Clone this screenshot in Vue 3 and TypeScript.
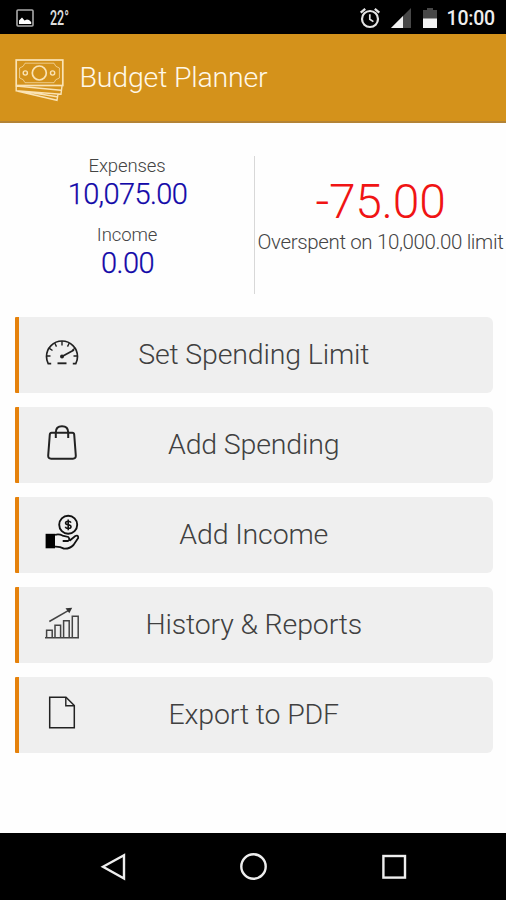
<script setup lang="ts">
type IconName = 'gauge' | 'bag' | 'income' | 'chart' | 'file'

interface MenuAction {
  label: string
  icon: IconName
}

const actions: MenuAction[] = [
  { label: 'Set Spending Limit', icon: 'gauge' },
  { label: 'Add Spending', icon: 'bag' },
  { label: 'Add Income', icon: 'income' },
  { label: 'History & Reports', icon: 'chart' },
  { label: 'Export to PDF', icon: 'file' },
]
</script>

<template>
  <div class="screen">
    <div class="status">
      <svg class="photo" viewBox="0 0 18 18">
        <rect x="1" y="1" width="16" height="16" rx="1" fill="none" stroke="#aaa" stroke-width="1.6" />
        <path d="M3 15V11.5L6 8.5L8.5 11.5L11 10.5L13 11L15.2 13V15Z" fill="#fff" />
      </svg>
      <span class="temp">22°</span>
      <svg class="alarm" viewBox="0 0 22 22">
        <g fill="none" stroke="#e4e4e4">
          <circle cx="11" cy="12" r="8" stroke-width="2.2" />
          <path d="M1.7 5.6L6.2 1.8M20.3 5.6L15.8 1.8" stroke-width="2.3" />
          <path d="M10.8 7.2V12.3L14.4 14.6" stroke-width="1.7" />
        </g>
      </svg>
      <svg class="signal" viewBox="0 0 20 20">
        <path d="M20 0V20H0Z" fill="#484848" />
        <path d="M12 8V20H0Z" fill="#f2f2f2" />
      </svg>
      <svg class="battery" viewBox="0 0 14 20">
        <path d="M0 2H4V0H10V2H14V11H0Z" fill="#484848" />
        <path d="M0 10.5H14V20H0Z" fill="#f2f2f2" />
      </svg>
      <span class="clock">10:00</span>
    </div>

    <header class="header">
      <svg class="money" viewBox="0 0 50 44" fill="none" stroke="#fae3b5" stroke-width="1.4">
        <rect x="1.2" y="2" width="46.6" height="25.5" stroke-width="1.7" />
        <circle cx="24.3" cy="15" r="7" stroke-width="1.7" />
        <circle cx="10.3" cy="15" r="2.1" />
        <circle cx="37.6" cy="15" r="2.1" />
        <path d="M10 5.2H39M10 24.7H39M4.6 10V20M44.4 10V20M10 5.2Q9 9 4.6 10M39 5.2Q40 9 44.4 10M4.6 20Q9 21 10 24.7M44.4 20Q40 21 39 24.7" stroke-width="1" opacity="0.7" />
        <path d="M1.2 28V32.8L46 36.2L47 28M1.2 28L46 32.2M2 33L42 42.3L43 36.2M9 33.5L42 38.8" />
      </svg>
      <h1 class="title">Budget Planner</h1>
    </header>

    <section class="summary">
      <div class="totals">
        <span class="caption">Expenses</span>
        <span class="amount">10,075.00</span>
        <span class="caption second">Income</span>
        <span class="amount">0.00</span>
      </div>
      <div class="balance">
        <span class="remaining">-75.00</span>
        <span class="limit">Overspent on 10,000.00 limit</span>
      </div>
    </section>

    <main class="menu">
      <button v-for="a in actions" :key="a.icon" class="action" type="button">
        <svg class="icon" viewBox="0 0 36 36" fill="none" stroke="#222" stroke-width="1.5">
          <g v-if="a.icon === 'gauge'">
            <path d="M7.2 29.6H4.2Q2.5 26.5 2.5 22.5A15.5 15.5 0 0 1 33.5 22.5Q33.5 26.5 31.8 29.6H28.8" stroke-width="1.7" />
            <path d="M13.5 29.3H22.5" stroke-width="1.9" />
            <path d="M18 7V11.5M10.7 9L12.5 12.6M25.3 9L23.5 12.6M5 14.2L8.5 16.5M31 14.2L28.5 16M2.8 22H6.5M33.2 22H29.5" stroke-width="1.4" />
            <path d="M18 22.5L30 16" stroke-width="1.8" />
            <circle cx="18" cy="22.5" r="2" fill="#222" stroke="none" />
          </g>
          <g v-else-if="a.icon === 'bag'">
            <path d="M7.6 8.7H28.4Q30 8.7 30.2 10.5L31.8 31.5Q32 34.7 28.9 34.7H7.1Q4 34.7 4.2 31.5L5.8 10.5Q6 8.7 7.6 8.7Z" stroke-width="2" />
            <path d="M11.8 14V8.5Q11.8 2.3 18 2.3Q24.2 2.3 24.2 8.5V14" stroke-width="2" />
          </g>
          <g v-else-if="a.icon === 'income'" stroke="#111">
            <circle cx="24.2" cy="10.8" r="9" stroke-width="1.9" />
            <path d="M27 8.7Q26.3 7.2 24.2 7.2Q21.6 7.2 21.6 9Q21.6 10.5 24.2 10.8Q27 11.1 27 12.8Q27 14.5 24.2 14.5Q21.9 14.5 21.3 12.7M24.2 5.5V16.2" stroke-width="1.6" />
            <path d="M1.6 19.8H11V34.3H1.6Z" fill="#000" stroke="none" />
            <path d="M11 20.8Q15 19.5 18.5 21.6L24.3 23Q26.5 25.6 24 27H18.7M25.5 26.8L31.3 22Q34.4 20.6 34.2 24L29.5 31Q25.5 35 20 34.6Q16 32.4 11 32.6" stroke-width="1.8" />
          </g>
          <g v-else-if="a.icon === 'chart'" stroke="#444">
            <path d="M1 33.8H35M2.6 33.8V26.2H8.2V33.8M11 33.8V21.2H16.6V33.8M19.6 33.8V16.8H25.2V33.8M28.3 33.8V12.2H34.2V33.8" stroke-width="1.5" />
            <path d="M5.3 17.5L25.5 5.8" stroke-width="1.5" />
            <path d="M21.5 4.2L28.2 3.7L25.3 9.2Z" fill="#333" stroke="none" />
          </g>
          <g v-else>
            <path d="M5.7 3.2H22L30.3 11.5V33.8H5.7Z" stroke-width="1.5" />
            <path d="M21.8 3.5V11.8H30" stroke-width="1.4" />
          </g>
        </svg>
        <span class="label">{{ a.label }}</span>
      </button>
    </main>

    <nav class="nav">
      <svg viewBox="0 0 28 28"><path d="M4 13.8L25 2.3V25.5Z" /></svg>
      <svg viewBox="0 0 28 28"><circle cx="13.5" cy="13.5" r="12.2" /></svg>
      <svg viewBox="0 0 28 28"><rect x="3.4" y="3" width="21.6" height="21.6" /></svg>
    </nav>
  </div>
</template>

<style>
body {
  margin: 0;
  background: #fefefe;
}
</style>

<style scoped>
.screen {
  box-sizing: border-box;
  width: 506px;
  height: 900px;
  display: flex;
  flex-direction: column;
  overflow: hidden;
  background: #fefefe;
  font-family: Roboto, sans-serif;
  font-weight: 300;
}
.status {
  box-sizing: border-box;
  flex: none;
  height: 34px;
  display: flex;
  align-items: center;
  padding: 2px 11px 0 16px;
  background: #000;
  color: #eee;
}
.photo {
  width: 18px;
  height: 18px;
}
.temp {
  margin-left: 16px;
  font: 500 19.5px Roboto, sans-serif;
  color: #ddd;
  transform: scaleX(0.64);
  transform-origin: left;
}
.alarm {
  width: 22px;
  height: 22px;
  margin-left: auto;
}
.signal {
  width: 20px;
  height: 20px;
  margin-left: 10px;
}
.battery {
  width: 14px;
  height: 20px;
  margin-left: 12px;
}
.clock {
  margin-left: 10px;
  font-size: 19.5px;
  font-weight: 500;
  letter-spacing: -0.2px;
}
.header {
  box-sizing: border-box;
  flex: none;
  height: 89px;
  display: flex;
  align-items: center;
  padding-left: 15px;
  background: #d4921b;
  border-bottom: 2px solid #b38335;
}
.money {
  width: 50px;
  height: 44px;
  margin-top: 5px;
}
.title {
  margin: 1px 0 0 14.5px;
  font-size: 28.5px;
  line-height: 34px;
  font-weight: 300;
  letter-spacing: -0.18px;
  color: #fff8e8;
}
.summary {
  flex: none;
  height: 138px;
  margin-top: 33px;
  display: flex;
}
.totals {
  box-sizing: border-box;
  flex: none;
  width: 255px;
  display: flex;
  flex-direction: column;
  align-items: center;
  border-right: 1px solid #d8d8d8;
}
.caption {
  margin-top: -1px;
  font-size: 18.5px;
  line-height: 22px;
  letter-spacing: -0.1px;
  color: #444;
}
.second {
  margin-top: 13px;
}
.amount {
  padding-left: 1px;
  font-size: 29px;
  line-height: 34px;
  letter-spacing: -0.6px;
  color: #1208a8;
  -webkit-text-stroke: 0.25px #1208a8;
}
.balance {
  flex: none;
  width: 251px;
  display: flex;
  flex-direction: column;
  align-items: center;
  padding-top: 18px;
}
.remaining {
  font-size: 48px;
  line-height: 56px;
  letter-spacing: -0.3px;
  color: #f01414;
}
.limit {
  font-size: 20.5px;
  line-height: 24px;
  letter-spacing: -0.37px;
  white-space: nowrap;
  color: #444;
}
.menu {
  flex: 1;
  display: flex;
  flex-direction: column;
  gap: 14.4px;
  padding: 23px 13px 0 14.5px;
}
.action {
  box-sizing: border-box;
  height: 75.6px;
  display: grid;
  grid-template-columns: 100%;
  align-items: center;
  padding: 0;
  border: 0;
  border-left: 4.5px solid #e5820c;
  border-radius: 1px 6px 6px 1px;
  background: #efefef;
  font: inherit;
  color: #404040;
}
.icon {
  grid-area: 1 / 1;
  width: 36px;
  height: 36px;
  margin: 0 0 5px 25.5px;
}
.label {
  grid-area: 1 / 1;
  padding-right: 4px;
  font-size: 28.5px;
  line-height: 34px;
  letter-spacing: -0.15px;
  text-align: center;
}
.nav {
  box-sizing: border-box;
  flex: none;
  height: 67px;
  display: flex;
  justify-content: space-between;
  align-items: center;
  padding: 0 98px 0 99px;
  background: #000;
}
.nav svg {
  width: 28px;
  height: 28px;
  fill: none;
  stroke: #eee;
  stroke-width: 2.4;
}
</style>
